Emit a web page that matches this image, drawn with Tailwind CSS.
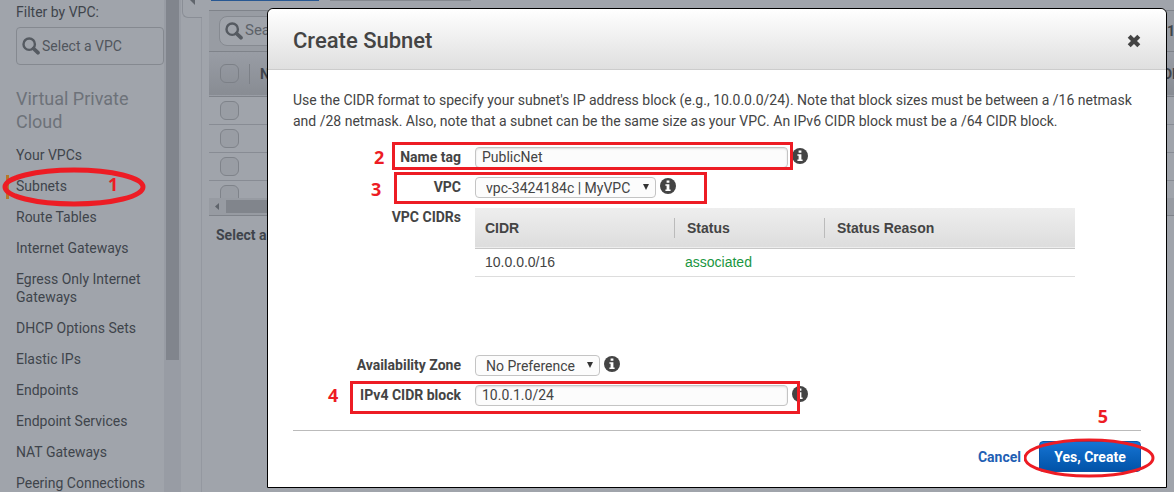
<!DOCTYPE html>
<html lang="en">
<head>
<meta charset="utf-8">
<title>Create Subnet</title>
<script src="https://cdn.jsdelivr.net/npm/@tailwindcss/browser@4"></script>
</head>
<body class="relative flex h-screen overflow-hidden bg-[#a0a4ab] font-[Roboto,sans-serif] text-sm text-[#444444]">
<svg class="hidden" aria-hidden="true">
  <symbol id="info" viewBox="0 0 16 16"><circle cx="8" cy="8" r="8" fill="#444"/><path fill="#fff" d="M6.6 2.4h2.8v2.4H6.6zM5.4 6.2h4v5.2h1.2V13H5.4v-1.6h1.2V7.8H5.4z"/></symbol>
  <symbol id="search" viewBox="0 0 18 18"><circle cx="7.2" cy="7.2" r="5.7" fill="none" stroke="#555a61" stroke-width="2.4"/><path d="M11.5 11.5l4.4 4.2" stroke="#555a61" stroke-width="3.8" stroke-linecap="round"/></symbol>
</svg>

<aside class="flex w-[181px] shrink-0">
  <div class="w-[164px] shrink-0 pl-4">
    <label for="filter" class="mt-[3px] block leading-[18px] text-[#3f444b]">Filter by VPC:</label>
    <div class="mt-[6px] flex h-[38px] items-center rounded border border-[#858990] pl-[5px]">
      <svg class="size-[18px] shrink-0"><use href="#search"/></svg>
      <input id="filter" value="Select a VPC" class="ml-[2px] w-full min-w-0 bg-transparent text-[#51565d] outline-none">
    </div>
    <h2 class="mt-[22px] text-lg leading-[23px] text-[#6d7279]">Virtual Private Cloud</h2>
    <nav class="mt-[13px] flex flex-col gap-[13px] leading-[18px] text-[#3f444b]">
      <a href="#">Your VPCs</a>
      <div class="relative">
        <span class="absolute -left-[10px] -top-[2px] h-6 w-[3px] bg-[#b5782a]"></span>
        <a href="#">Subnets</a>
        <svg class="absolute -left-[14px] -top-[10px] h-[40px] w-[145px]" aria-hidden="true"><ellipse cx="72" cy="20" rx="69" ry="17" fill="none" stroke="#ed1c24" stroke-width="5"/></svg>
        <span class="absolute left-[92px] -top-[2px] font-['Open_Sans',sans-serif] text-lg leading-[18px] font-bold text-[#ed1c24]">1</span>
      </div>
      <a href="#">Route Tables</a>
      <a href="#">Internet Gateways</a>
      <a href="#">Egress Only Internet Gateways</a>
      <a href="#">DHCP Options Sets</a>
      <a href="#">Elastic IPs</a>
      <a href="#">Endpoints</a>
      <a href="#">Endpoint Services</a>
      <a href="#">NAT Gateways</a>
      <a href="#">Peering Connections</a>
    </nav>
  </div>
  <div class="h-screen w-[17px] bg-[#989ca4] px-[2px]"><div class="h-[360px] bg-[#81858d]"></div></div>
</aside>

<div class="flex w-[21px] shrink-0 flex-col pl-px">
  <button aria-label="Collapse sidebar" class="flex h-[18px] w-[20px] justify-center rounded-bl-md border-b border-l border-[#8a8e96]"><svg class="-mt-px h-[6px] w-[5px]" viewBox="0 0 5 6"><path d="M5 0v6L0 1z" fill="#60656c"/></svg></button>
  <div class="flex-1 border-r border-[#9498a0]"></div>
</div>

<main class="min-w-0 flex-1 overflow-hidden pl-[7px]">
  <div class="flex h-[10px] gap-[11px] pl-[2px]">
    <div class="h-px w-[108px] bg-[#285893]"></div>
    <div class="h-px w-[141px] bg-[#85898f]"></div>
  </div>
  <div class="flex h-[42px] items-center justify-between border-y border-[#7f838a] bg-[#989ca3] pl-[10px]">
    <div class="flex h-[30px] w-[220px] items-center rounded-lg border border-[#868a91] bg-[#a0a4ab] pl-[5px]">
      <svg class="size-[18px]"><use href="#search"/></svg>
      <input aria-label="Search subnets" value="Search Subnets" class="ml-[2px] w-40 bg-transparent text-[15px] text-[#5d6269]">
    </div>
    <span class="w-[7px] shrink-0 font-bold text-[#3f444b]">1</span>
  </div>
  <table class="w-full table-fixed border-collapse text-left">
    <thead class="h-11 border-b border-[#7f838a] bg-linear-to-b from-[#999da5] to-[#888c93] text-[#3f444b]">
      <tr>
        <th class="w-10 pl-[11px]"><input type="checkbox" aria-label="Select all" class="block size-[19px] appearance-none rounded-md border border-[#7c8087]"></th>
        <th><span class="block h-5 border-l border-[#7c8087] pl-[10px]">Name</span></th>
        <th class="w-[11px] whitespace-nowrap">DHCP</th>
      </tr>
    </thead>
    <tbody>
      <tr class="h-7 border-b border-[#888c94]"><td class="pl-[11px]"><input type="checkbox" aria-label="Select subnet" class="block size-[19px] appearance-none rounded-md border border-[#7f838a] bg-[#999da4]"></td><td></td><td></td></tr>
      <tr class="h-7 border-b border-[#888c94]"><td class="pl-[11px]"><input type="checkbox" aria-label="Select subnet" class="block size-[19px] appearance-none rounded-md border border-[#7f838a] bg-[#999da4]"></td><td></td><td></td></tr>
      <tr class="h-7 border-b border-[#888c94]"><td class="pl-[11px]"><input type="checkbox" aria-label="Select subnet" class="block size-[19px] appearance-none rounded-md border border-[#7f838a] bg-[#999da4]"></td><td></td><td></td></tr>
    </tbody>
  </table>
  <div class="h-[17px] overflow-hidden pt-1 pl-[11px]"><input type="checkbox" aria-label="Select subnet" class="block size-[19px] appearance-none rounded-md border border-[#7f838a] bg-[#999da4]"></div>
  <div class="flex h-[18px] items-center border-b border-[#7f838a] bg-[#979ba2] pl-[6px]">
    <svg class="h-[7px] w-1" viewBox="0 0 4 7"><path d="M4 0v7L0 3.5z" fill="#5f646b"/></svg>
    <div class="ml-[7px] h-[13px] w-[820px] bg-[#81858c]"></div>
  </div>
  <p class="mt-[9px] pl-[7px] leading-5 font-bold text-[#3f444b]">Select a subnet above</p>
</main>

<div class="absolute inset-0 pt-2 pr-[7px] pb-1 pl-[267px]">
  <section role="dialog" aria-labelledby="title" class="flex h-full flex-col rounded-t-md border border-black bg-white">
    <header class="flex h-[61px] shrink-0 items-center justify-between rounded-t-md border-b border-[#cccccc] bg-linear-to-b from-white to-[#dfdfdf] px-[25px]">
      <h1 id="title" class="mt-1 text-[22px] font-medium">Create Subnet</h1>
      <button aria-label="Close" class="mt-[3px]"><svg class="size-[14px]" viewBox="0 0 14 14"><path d="M2.2 2.2l9.6 9.6M11.8 2.2L2.2 11.8" stroke="#444" stroke-width="4.2"/></svg></button>
    </header>
    <form class="flex flex-1 flex-col px-[25px] pt-5">
      <p class="leading-[21px]">Use the CIDR format to specify your subnet's IP address block (e.g., 10.0.0.0/24). Note that block sizes must be between a /16 netmask and /28 netmask. Also, note that a subnet can be the same size as your VPC. An IPv6 CIDR block must be a /64 CIDR block.</p>

      <div class="relative mt-[15px] flex h-[30px] items-start">
        <label for="name" class="w-[168px] text-right leading-5 font-bold">Name tag</label>
        <input id="name" value="PublicNet" class="ml-[14px] h-[21px] w-[313px] rounded border border-[#c4c4c4] bg-[#fcfcfc] px-[6px] pb-px shadow-[inset_0_1px_2px_#ddd]">
        <svg class="ml-1 mt-px size-4"><use href="#info"/></svg>
        <div class="absolute -top-[5px] left-[99px] h-[28px] w-[401px] border-3 border-[#ed1c24]"></div>
        <span class="absolute left-[81px] top-0 font-['Open_Sans',sans-serif] text-lg leading-5 font-bold text-[#ed1c24]">2</span>
      </div>
      <div class="relative flex h-[30px] items-start">
        <label for="vpc" class="w-[168px] text-right leading-5 font-bold">VPC</label>
        <div class="relative ml-[14px]">
          <select id="vpc" class="block h-[21px] w-[181px] appearance-none rounded border border-[#c4c4c4] bg-[#fcfcfc] pl-[10px]"><option>vpc-3424184c | MyVPC</option></select>
          <svg class="pointer-events-none absolute right-[7px] top-[7px] h-[6px] w-[6px]" viewBox="0 0 6 6"><path d="M0 0h6L3 6z" fill="#333"/></svg>
        </div>
        <svg class="ml-1 mt-px size-4"><use href="#info"/></svg>
        <div class="absolute -top-[5px] left-[101px] h-[32px] w-[313px] border-3 border-[#ed1c24]"></div>
        <span class="absolute left-[78px] top-[2px] font-['Open_Sans',sans-serif] text-lg leading-5 font-bold text-[#ed1c24]">3</span>
      </div>
      <div class="flex h-[148px] items-start">
        <span class="w-[168px] text-right leading-5 font-bold">VPC CIDRs</span>
        <table class="ml-[14px] mt-px w-[600px] table-fixed border-collapse text-left font-['Liberation_Sans',sans-serif]">
          <thead class="h-10 border-b border-[#c8c8c8] bg-linear-to-b from-[#eeeeee] to-[#dddddd]">
            <tr>
              <th class="w-[199px] pl-[10px]">CIDR</th>
              <th class="w-[150px]"><span class="block border-l border-[#bbbbbb] pl-3">Status</span></th>
              <th><span class="block border-l border-[#bbbbbb] pl-3">Status Reason</span></th>
            </tr>
          </thead>
          <tbody>
            <tr class="h-7 border-b border-[#dddddd]"><td class="pl-[10px]">10.0.0.0/16</td><td class="pl-[11px] text-[#1a9641]">associated</td><td></td></tr>
          </tbody>
        </table>
      </div>
      <div class="flex h-[30px] items-start">
        <label for="az" class="w-[168px] text-right leading-5 font-bold">Availability Zone</label>
        <div class="relative ml-[14px]">
          <select id="az" class="block h-[21px] w-[125px] appearance-none rounded border border-[#c4c4c4] bg-[#fcfcfc] pl-[10px]"><option>No Preference</option></select>
          <svg class="pointer-events-none absolute right-[7px] top-[7px] h-[6px] w-[6px]" viewBox="0 0 6 6"><path d="M0 0h6L3 6z" fill="#333"/></svg>
        </div>
        <svg class="ml-1 mt-px size-4"><use href="#info"/></svg>
      </div>
      <div class="relative flex h-[45px] items-start">
        <label for="block" class="w-[168px] text-right leading-5 font-bold">IPv4 CIDR block</label>
        <input id="block" value="10.0.1.0/24" class="ml-[14px] h-[21px] w-[313px] rounded border border-[#c4c4c4] bg-[#fcfcfc] px-[6px] pb-px shadow-[inset_0_1px_2px_#ddd]">
        <svg class="ml-1 mt-px size-4"><use href="#info"/></svg>
        <div class="absolute -top-1 left-[57px] h-[33px] w-[450px] border-3 border-[#ed1c24]"></div>
        <span class="absolute left-[35px] top-0 font-['Open_Sans',sans-serif] text-lg leading-5 font-bold text-[#ed1c24]">4</span>
      </div>
      <footer class="relative flex items-center justify-end gap-[18px] border-t border-[#bbbbbb] pt-[10px]">
        <a href="#" class="font-bold text-[#1f5fb4]">Cancel</a>
        <button type="button" class="h-[31px] w-[102px] rounded border border-[#0a55a8] bg-linear-to-b from-[#1574d4] to-[#0253a8] font-bold text-white">Yes, Create</button>
        <svg class="absolute -right-[14px] top-[7px] h-[40px] w-[131px]" aria-hidden="true"><ellipse cx="65" cy="20" rx="64" ry="18" fill="none" stroke="#ed1c24" stroke-width="3"/></svg>
        <span class="absolute right-[33px] -top-[25px] font-['Open_Sans',sans-serif] text-lg leading-5 font-bold text-[#ed1c24]">5</span>
      </footer>
    </form>
  </section>
</div>
</body>
</html>
